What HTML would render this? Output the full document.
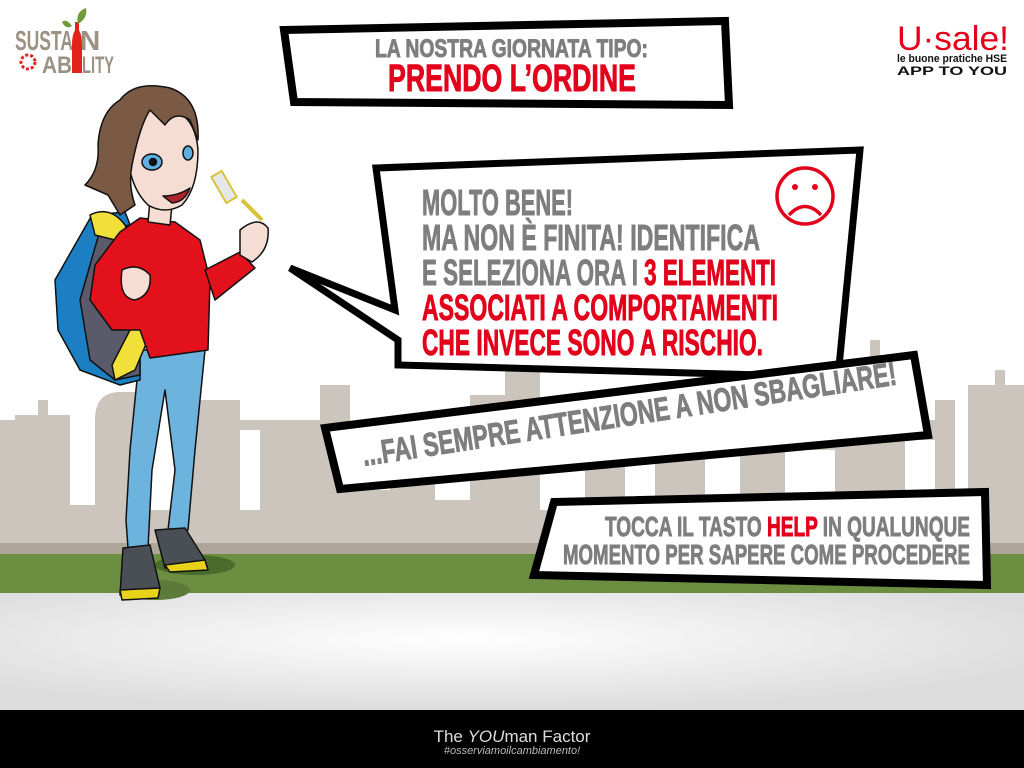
<!DOCTYPE html>
<html><head><meta charset="utf-8">
<style>
html,body{margin:0;padding:0;width:1024px;height:768px;overflow:hidden;background:#fff}
svg{display:block}
text{font-family:"Liberation Sans Narrow","Liberation Sans",sans-serif;font-weight:bold}
.g{fill:#7e7e7e;stroke:#7e7e7e;stroke-width:0.9}
.r{fill:#e2001a;stroke:#e2001a;stroke-width:0.9}
</style></head><body>
<svg width="1024" height="768" viewBox="0 0 1024 768" xmlns="http://www.w3.org/2000/svg">
<defs>
<radialGradient id="gr" cx="0.45" cy="0.4" r="0.6">
<stop offset="0" stop-color="#ffffff"/><stop offset="1" stop-color="#dcdddc"/>
</radialGradient>
</defs>
<rect width="1024" height="768" fill="#fff"/>
<g fill="#cbc5bd">
<rect x="0" y="420" width="1024" height="130"/>
<rect x="15" y="415" width="55" height="135"/>
<rect x="38" y="400" width="10" height="20"/>
<path d="M95 420 Q95 392 120 392 L140 392 L140 420Z"/>
<rect x="190" y="400" width="50" height="150"/>
<rect x="260" y="440" width="60" height="110"/>
<rect x="320" y="385" width="30" height="165"/>
<rect x="395" y="420" width="40" height="130"/>
<rect x="470" y="395" width="40" height="155"/>
<rect x="505" y="360" width="35" height="190"/>
<rect x="585" y="395" width="40" height="155"/>
<rect x="655" y="410" width="50" height="140"/>
<rect x="740" y="430" width="45" height="120"/>
<rect x="845" y="440" width="60" height="110"/>
<rect x="870" y="340" width="10" height="100"/>
<rect x="935" y="400" width="20" height="150"/>
<rect x="968" y="385" width="56" height="165"/>
<rect x="995" y="370" width="10" height="20"/>
</g>
<g fill="#fff">
<rect x="70" y="420" width="25" height="85"/>
<rect x="140" y="420" width="40" height="90"/>
<rect x="240" y="430" width="20" height="80"/>
<rect x="350" y="420" width="40" height="70"/>
<rect x="435" y="440" width="35" height="60"/>
<rect x="540" y="420" width="45" height="90"/>
<rect x="625" y="430" width="30" height="80"/>
<rect x="705" y="440" width="35" height="60"/>
<rect x="785" y="450" width="50" height="70"/>
<rect x="905" y="440" width="30" height="65"/>
<rect x="955" y="410" width="13" height="100"/>
</g>
<rect x="0" y="543" width="1024" height="12" fill="#afa69a"/>
<rect x="0" y="554" width="1024" height="40" fill="#6b8e40"/>
<rect x="0" y="593" width="1024" height="117" fill="url(#gr)"/>
<rect x="0" y="710" width="1024" height="58" fill="#000"/>
<text x="512" y="742" text-anchor="middle" font-size="17" fill="#ddd" style="font-weight:normal">The <tspan font-style="italic">YOU</tspan>man Factor</text>
<text x="512" y="754" text-anchor="middle" font-size="11" fill="#bbb" font-style="italic" style="font-weight:normal">#osserviamoilcambiamento!</text>

<text x="15" y="50" font-size="28" fill="#9b9284" textLength="58" lengthAdjust="spacingAndGlyphs">SUSTA</text>
<text x="80" y="50" font-size="28" fill="#9b9284">N</text>
<text x="42" y="73" font-size="24" fill="#9b9284" textLength="30" lengthAdjust="spacingAndGlyphs">AB</text>
<text x="82" y="73" font-size="24" fill="#9b9284" textLength="32" lengthAdjust="spacingAndGlyphs">LITY</text>
<path d="M72 73 L72 45 Q72 35 75 30 L75 22 L79 22 L79 30 Q82 35 82 45 L82 73Z" fill="#e2231a"/>
<path d="M78 24 Q75 12 86 8 Q88 18 78 24Z" fill="#6e9a3a"/>
<path d="M72 26 Q66 18 62 22 Q66 30 72 26Z" fill="#6e9a3a"/>
<circle cx="28" cy="62" r="7" fill="none" stroke="#e2231a" stroke-width="3" stroke-dasharray="3 2"/>
<text x="897" y="50" font-size="34" fill="#e2001a" style="font-weight:normal;font-family:'Liberation Sans',sans-serif" textLength="112" lengthAdjust="spacingAndGlyphs">U·sale!</text>
<text x="897" y="62" font-size="11" fill="#111" textLength="110" lengthAdjust="spacingAndGlyphs">le buone pratiche HSE</text>
<text x="897" y="75" font-size="12" fill="#111" textLength="110" lengthAdjust="spacingAndGlyphs">APP TO YOU</text>

<polygon points="284,30 725,21 729,105 294,102" fill="#fff" stroke="#000" stroke-width="8"/>
<text class="g" x="375" y="57" font-size="25" textLength="273" lengthAdjust="spacingAndGlyphs">LA NOSTRA GIORNATA TIPO:</text>
<text class="r" x="388" y="91" font-size="38" textLength="248" lengthAdjust="spacingAndGlyphs">PRENDO L’ORDINE</text>

<polygon points="376,168 860,150 838,377 398,365 398,340 290,268 395,310" fill="#fff" stroke="#000" stroke-width="7"/>
<text class="g" x="422" y="215" font-size="36" textLength="151" lengthAdjust="spacingAndGlyphs">MOLTO BENE!</text>
<text class="g" x="422" y="250" font-size="36" textLength="338" lengthAdjust="spacingAndGlyphs">MA NON È FINITA! IDENTIFICA</text>
<text class="g" x="422" y="285" font-size="36" textLength="354" lengthAdjust="spacingAndGlyphs">E SELEZIONA ORA I <tspan fill="#e2001a" stroke="#e2001a">3 ELEMENTI</tspan></text>
<text class="r" x="422" y="320" font-size="36" textLength="356" lengthAdjust="spacingAndGlyphs">ASSOCIATI A COMPORTAMENTI</text>
<text class="r" x="422" y="355" font-size="36" textLength="341" lengthAdjust="spacingAndGlyphs">CHE INVECE SONO A RISCHIO.</text>
<circle cx="805" cy="196" r="28" fill="none" stroke="#e2001a" stroke-width="3.5"/>
<circle cx="795" cy="187" r="3" fill="#e2001a"/><circle cx="815" cy="187" r="3" fill="#e2001a"/>
<path d="M789 215 Q805 198 821 215" fill="none" stroke="#e2001a" stroke-width="3.5"/>

<polygon points="325,428 914,355 928,435 340,489" fill="#fff" stroke="#000" stroke-width="8"/>
<text class="g" x="0" y="0" font-size="33" textLength="540" lengthAdjust="spacingAndGlyphs" transform="translate(364,466) rotate(-8.7)">...FAI SEMPRE ATTENZIONE A NON SBAGLIARE!</text>

<polygon points="554,502 985,492 987,585 534,575" fill="#fff" stroke="#000" stroke-width="8"/>
<text class="g" x="970" y="536" text-anchor="end" font-size="28" textLength="365" lengthAdjust="spacingAndGlyphs">TOCCA IL TASTO <tspan fill="#e2001a" stroke="#e2001a">HELP</tspan> IN QUALUNQUE</text>
<text class="g" x="970" y="564" text-anchor="end" font-size="28" textLength="407" lengthAdjust="spacingAndGlyphs">MOMENTO PER SAPERE COME PROCEDERE</text>

<g stroke="#111" stroke-width="1.5" stroke-linejoin="round">
<ellipse cx="195" cy="565" rx="40" ry="10" fill="#4a6b2c" stroke="none"/>
<ellipse cx="155" cy="590" rx="35" ry="10" fill="#5c7a3a" stroke="none"/>
<path d="M140 350 L130 450 L126 520 L128 548 L148 548 L152 470 L165 390 L175 470 L168 530 L188 530 L195 450 L205 350Z" fill="#6cb4dd"/>
<path d="M123 548 L150 545 L160 588 L140 598 L120 595Z" fill="#4a4e55"/>
<path d="M120 590 L160 588 L158 598 L122 600Z" fill="#e8d31a"/>
<path d="M155 530 L185 528 L205 560 L200 568 L165 568Z" fill="#4a4e55"/>
<path d="M165 565 L205 560 L208 570 L170 572Z" fill="#e8d31a"/>
<path d="M92 215 L125 212 L140 250 L140 380 L120 385 L80 370 L58 330 L55 280 Z" fill="#1c7fc3"/>
<path d="M100 230 L130 225 L140 260 L140 375 L115 380 L90 360 L80 300Z" fill="#5a5a6a"/>
<path d="M90 215 Q110 205 125 225 L140 260 L135 270 L115 240 L95 235Z" fill="#f2e03a"/>
<path d="M125 290 L148 290 L152 330 L135 370 L115 380 L112 365 L130 330Z" fill="#f2e03a"/>
<path d="M140 218 L175 222 L200 240 L210 280 L208 350 L150 358 L140 330 L112 330 L90 300 L95 265 L120 232Z" fill="#e3111b"/>
<path d="M205 270 L240 252 L255 268 L215 300Z" fill="#e3111b"/>
<path d="M122 270 Q138 262 150 275 Q152 295 135 300 Q118 298 122 270Z" fill="#f6ddd3"/>
<path d="M240 230 Q258 215 268 228 Q270 250 252 262 L240 255Z" fill="#f6ddd3"/>
<path d="M242 200 L262 220" stroke="#d9c13a" stroke-width="4"/>
<rect x="218" y="172" width="12" height="30" fill="#e5e8ea" stroke="#d9c13a" stroke-width="2" transform="rotate(-30 224 187)"/>
<path d="M150 200 L172 205 L170 225 L148 222Z" fill="#f6ddd3"/>
<path d="M128 140 Q130 110 165 108 Q195 112 198 150 Q198 188 182 205 Q165 215 148 205 Q132 190 128 160Z" fill="#f6ddd3"/>
<path d="M163 196 Q178 196 190 188 Q185 202 172 203Z" fill="#b0232a"/>
<ellipse cx="152" cy="162" rx="10" ry="8" fill="#5fb0e0"/>
<circle cx="153" cy="162" r="3.5" fill="#111"/>
<ellipse cx="188" cy="153" rx="5" ry="7" fill="#5fb0e0"/>
<path d="M120 100 Q135 80 170 88 Q200 98 198 140 L190 120 Q175 110 165 125 L150 110 Q140 125 132 165 Q128 185 135 205 L120 215 L108 195 L85 185 Q100 170 98 145 Q100 112 120 100Z" fill="#7a5a45"/>
</g>
</svg>
</body></html>
